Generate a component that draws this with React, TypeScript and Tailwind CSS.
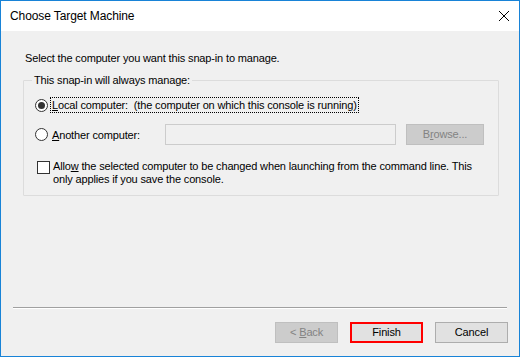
import React from "react";

export default function App() {
  const font = { fontFamily: '"Segoe UI", "Liberation Sans", Arial, sans-serif' };
  return (
    <div
      className="w-[520px] h-[357px] border border-[#1883d7] bg-[#f0f0f0] flex flex-col text-[11px] tracking-[-0.15px] text-black"
      style={font}
    >
      {/* Title bar */}
      <div className="h-[30px] bg-white flex items-center justify-between shrink-0">
        <span className="pl-[9px] text-[12px] tracking-[-0.1px] leading-none">Choose Target Machine</span>
        <div className="w-[30px] h-[30px] flex items-center justify-center">
          <svg width="10" height="10" viewBox="0 0 10 10">
            <path d="M0 0 L10 10 M10 0 L0 10" stroke="#000" strokeWidth="1" />
          </svg>
        </div>
      </div>

      {/* Content */}
      <div className="flex-1 flex flex-col px-[22px]">
        <div className="pt-[20px] pl-[2px] leading-[14px]">Select the computer you want this snap-in to manage.</div>

        <div className="relative mt-[15px] h-[116px] border border-[#dcdcdc] rounded-[1px] w-[476px]">
          <div className="absolute left-[8px] -top-[8px] px-[2px] bg-[#f0f0f0] leading-[14px]">
            This snap-in will always manage:
          </div>

          <div className="flex items-center mt-[17px] ml-[11px] h-[14px]">
            <span className="w-[13px] h-[13px] rounded-full border border-[#333] bg-white flex items-center justify-center shrink-0">
              <span className="w-[7px] h-[7px] rounded-full bg-[#333]" />
            </span>
            <span className="ml-[3px] px-[1px] outline outline-1 outline-dotted outline-black leading-[14px]">
              <span className="underline">L</span>ocal computer:&nbsp; (the computer on which this console is running)
            </span>
          </div>

          <div className="flex items-center mt-[12px] ml-[11px] h-[21px]">
            <span className="w-[13px] h-[13px] rounded-full border border-[#333] bg-white shrink-0" />
            <span className="ml-[4px] w-[113px] leading-[14px]">
              <span className="underline">A</span>nother computer:
            </span>
            <div className="w-[231px] h-[21px] border border-[#cccccc] bg-[#f0f0f0]" />
            <div className="ml-[10px] w-[78px] h-[21px] border border-[#bfbfbf] bg-[#cccccc] text-[#838383] flex items-center justify-center">
              B<span className="underline">r</span>owse...
            </div>
          </div>

          <div className="flex items-start mt-[15px] ml-[13px]">
            <span className="mt-[1px] w-[13px] h-[13px] border border-[#333] bg-white shrink-0" />
            <span className="ml-[3px] leading-[13px] w-[425px]">
              Allo<span className="underline">w</span> the selected computer to be changed when launching from the command line. This only applies if you save the console.
            </span>
          </div>
        </div>

        <div className="mt-[111px] -mx-[10px] h-[2px] border-t border-[#a0a0a0] border-b border-b-white" />

        <div className="flex justify-end gap-[12px] mt-[13px] -mr-[11px]">
          <div className="w-[63px] h-[21px] border border-[#bfbfbf] bg-[#cccccc] text-[#838383] flex items-center justify-center">
            &lt; <span className="underline ml-[3px]">B</span>ack
          </div>
          <div className="w-[73px] h-[21px] border-2 border-[#ff0000] bg-[#e1e1e1] flex items-center justify-center">
            Finish
          </div>
          <div className="w-[73px] h-[21px] border border-[#adadad] bg-[#e1e1e1] flex items-center justify-center">
            Cancel
          </div>
        </div>
      </div>
    </div>
  );
}
